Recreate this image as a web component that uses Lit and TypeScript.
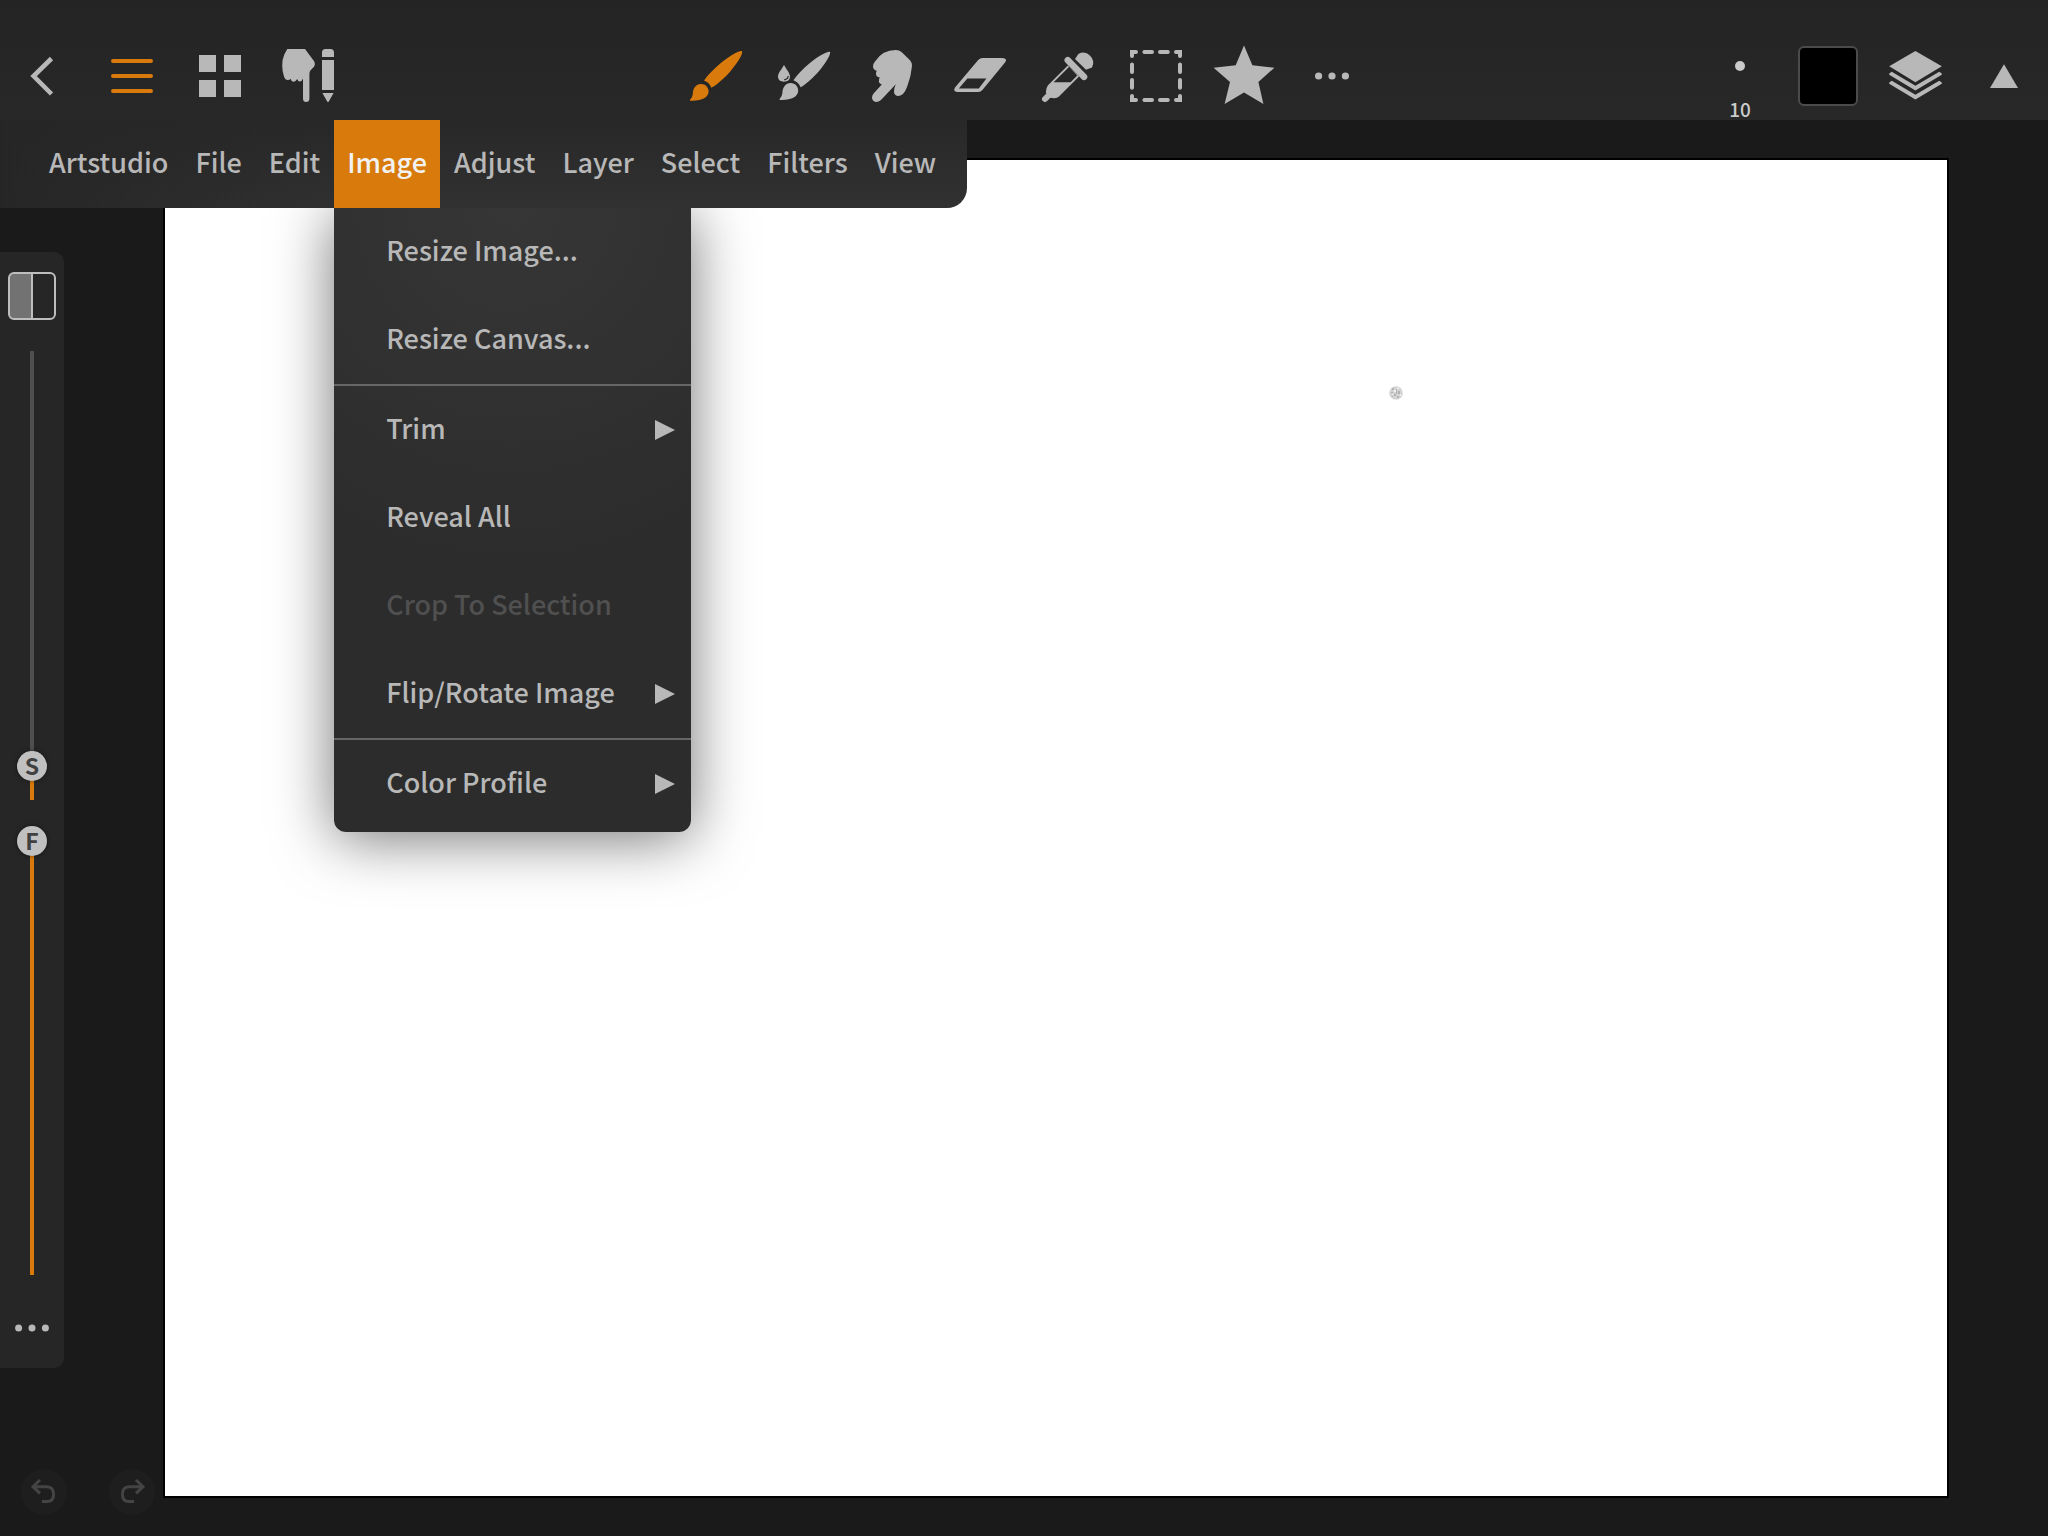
import { LitElement, css, html, svg, nothing, type TemplateResult } from "lit";
import { customElement, property, state } from "lit/decorators.js";
import { classMap } from "lit/directives/class-map.js";
import { styleMap } from "lit/directives/style-map.js";

const BRISTLES =
  "M18 68.8 V67.8 Q20.4 66 20.8 62 C21 56.4 23.8 52 29 52 C33.6 52 36.6 55.6 36.6 59.6 C36.4 65.6 29.5 69.4 18 68.8 Z";
const HANDLE =
  "M70 19.2 C70.4 20 70 21.6 69.2 23.4 C66.2 30 57.4 41.6 48 49.6 C45 52.2 42 54.6 39.4 55.8 C38.2 52.6 35.6 49.8 32 48.6 C37 41 49 29.6 60 23 C64.6 20.4 69 18.6 70 19.2 Z";

const ICONS: Record<string, TemplateResult> = {
  back: svg`<path d="M51.5 26.5 L33.6 44 L51.5 62" fill="none" stroke="currentColor" stroke-width="4.6" />`,
  menu: svg`<path d="M25 29 H63 M25 44 H63 M25 59 H63" fill="none" stroke="currentColor" stroke-width="4" stroke-linecap="round" />`,
  grid: svg`<path d="M23 23h17v17h-17z M48 23h17v17h-17z M23 48h17v17h-17z M48 48h17v17h-17z" />`,
  touch: svg`
    <path d="M23.3 17 H41 L50.3 29.4 Q51.8 32.4 50.2 34.6 L46.4 38.6 Q45.4 39.8 45.4 42 V66.8 Q45.2 70 42.2 70 Q39.2 70 39 66.8 V46.4 Q37.8 49.6 35.8 49.6 Q34 49.6 33.2 47 Q31.6 50 29.2 49.8 Q27.4 49.4 26.8 47 Q24.6 48.4 22.8 47.8 Q20.6 47 20 44.4 Q18.2 39 18.2 33.6 Q18.2 27 20.4 22.2 Z" />
    <path d="M58 25 V20.5 Q58 17 61.5 17 H66.5 Q70 17 70 20.5 V25 Z M58 28 H70 V58 H58 Z M58.4 61 H69.6 L64.8 69.4 Q64 70.4 63.2 69.4 Z" />`,
  brush: svg`<path d="${BRISTLES}" /><path d="${HANDLE}" />`,
  wet: svg`
    <path d="${BRISTLES}" transform="translate(1.6 -.9)" />
    <path d="${HANDLE}" transform="translate(2.6 1.2) scale(.963 .97)" />
    <path d="M24 33 C26.4 37.4 30 41 30 44.6 C30 48 27.4 49.8 24 49.8 C20.6 49.8 18 48 18 44.6 C18 41 21.6 37.4 24 33 Z" />
    <path d="M28.2 44 Q28 47.2 24.2 47.8" fill="none" stroke="#272727" stroke-width="1.2" />`,
  smudge: svg`<path d="M47.7 18 Q51.4 18 53.8 20.2 L62 28.2 Q64 30.4 64 33.8 Q63.2 44 59.6 53.2 Q57.6 59.4 54.6 62.2 Q52.4 64.2 49.8 64 Q46 63.2 46 59.4 Q46 56 47.8 52.2 L33 68 Q30.8 70 28 70 Q24.2 69.4 24 65.8 Q24 63.4 25.6 61.6 L33.8 52.6 Q30.2 51 31 48 Q31 46.8 31.8 45.4 Q27.8 45 28 41.4 Q28 40 28.8 38.8 Q25.2 38.2 25 34.6 Q24.8 31.8 27 29.4 Q34.4 18 47.7 18 Z" />`,
  eraser: svg`
    <path d="M46.6 26 H66.4 Q72 26.4 69 30.6 L46.6 57.8 Q44.8 60 42.2 60 H21.4 Q16.6 59.4 19 55.4 L42 28.2 Q44 26 46.6 26 Z" />
    <path d="M31.4 46.6 H50.4 L42.8 56.6 H22.8 Z" fill="#272727" />`,
  picker: svg`
    <path d="M51 27 L54.4 22 A10 10 0 0 1 68 35.4 L62 37.8 Z" />
    <path d="M43.8 28.2 L60 44.8" fill="none" stroke="currentColor" stroke-width="6.6" stroke-linecap="round" />
    <path d="M43.8 33.4 L24 53.2 Q21.8 56 21.8 60.4 L25.6 65.4 Q32 67.4 35 64.4 L55 44.6 Z" />
    <path d="M45.2 34.8 L29.6 50.2 H46.6 L53.2 43.4 Z" fill="#272727" />
    <path d="M21 67 L26 62" fill="none" stroke="currentColor" stroke-width="6" stroke-linecap="round" />`,
  select: svg`<g fill="none" stroke="currentColor" stroke-width="4" stroke-linecap="round">
    <path d="M20 24 V20 H24 M64 20 H68 V24 M68 64 V68 H64 M24 68 H20 V64" />
    <path d="M32.4 20 H40 M48 20 H55.8 M32.4 68 H40 M48 68 H55.8 M20 32.4 V40 M20 48 V55.8 M68 32.4 V40 M68 48 V55.8" />
  </g>`,
  star: svg`<path d="M44 13.6 L52.4 33.3 L74.4 35.7 L58.4 50 L63.4 72 L44 60.4 L24.6 72 L30 50 L13.6 35.7 L35.7 33.3 Z" />`,
  more: svg`<circle cx="30.6" cy="44" r="3.6" /><circle cx="44" cy="44" r="3.6" /><circle cx="57.4" cy="44" r="3.6" />`,
  layers: svg`
    <path d="M43.4 19 L69.8 34.3 L43.4 50.2 L17.2 34.3 Z" />
    <path d="M19.8 39.8 L43.4 53.8 L67.2 39.8 L69.8 41.4 V42.8 L43.4 58.6 L17.2 42.8 V41.4 Z" />
    <path d="M19.8 48.8 L43.4 62.8 L67.2 48.8 L69.8 50.4 V51.8 L43.4 67.6 L17.2 51.8 V50.4 Z" />`,
  collapse: svg`<path d="M44 32.2 L58 56 H30 Z" />`,
};

const icon = (name: string) =>
  html`<svg viewBox="0 0 88 88" width="88" height="88" fill="currentColor" aria-hidden="true">${ICONS[name]}</svg>`;

interface Tool {
  id: string;
  label: string;
}

const FILE_TOOLS: Tool[] = [
  { id: "back", label: "Back" },
  { id: "menu", label: "Menu" },
  { id: "grid", label: "Gallery" },
  { id: "touch", label: "Touch and pencil" },
];

const PAINT_TOOLS: Tool[] = [
  { id: "brush", label: "Brush" },
  { id: "wet", label: "Wet brush" },
  { id: "smudge", label: "Smudge" },
  { id: "eraser", label: "Eraser" },
  { id: "picker", label: "Eyedropper" },
  { id: "select", label: "Selection" },
  { id: "star", label: "Favorites" },
  { id: "more", label: "More tools" },
];

const MENUS = ["Artstudio", "File", "Edit", "Image", "Adjust", "Layer", "Select", "Filters", "View"];

interface Entry {
  label: string;
  submenu?: boolean;
  disabled?: boolean;
}

const IMAGE_MENU: Entry[][] = [
  [{ label: "Resize Image..." }, { label: "Resize Canvas..." }],
  [
    { label: "Trim", submenu: true },
    { label: "Reveal All" },
    { label: "Crop To Selection", disabled: true },
    { label: "Flip/Rotate Image", submenu: true },
  ],
  [{ label: "Color Profile", submenu: true }],
];

const resets = css`
  *,
  *::before,
  *::after {
    box-sizing: border-box;
  }
  button {
    margin: 0;
    padding: 0;
    border: 0;
    background: none;
    color: inherit;
    font: inherit;
    cursor: pointer;
  }
  svg {
    display: block;
  }
`;

@customElement("tool-bar")
class ToolBar extends LitElement {
  @state() private tool = "brush";

  static styles = [
    resets,
    css`
      :host {
        display: grid;
        grid-template-columns: 1fr auto 1fr;
        height: 120px;
        padding-top: 32px;
        background: linear-gradient(#242424, #282828);
        color: #b8b8b8;
      }
      .group {
        display: flex;
      }
      .end {
        justify-content: flex-end;
      }
      .tool {
        display: flex;
        align-items: center;
        justify-content: center;
        width: 88px;
        height: 88px;
      }
      .active {
        color: #d97b0c;
      }
      .size {
        flex-direction: column;
        justify-content: space-between;
        padding: 29px 0 1px;
        color: #cbcbcb;
        font-size: 19px;
        font-weight: 500;
        line-height: 20px;
      }
      .dot {
        width: 10px;
        height: 10px;
        border-radius: 50%;
        background: #cbcbcb;
      }
      .swatch {
        width: 60px;
        height: 60px;
        border: 2px solid #4b4b4b;
        border-radius: 6px;
        background: #000;
      }
    `,
  ];

  render() {
    return html`
      <div class="group">
        ${FILE_TOOLS.map(
          (t) => html`<button class=${classMap({ tool: true, active: t.id === "menu" })} aria-label=${t.label}>
            ${icon(t.id)}
          </button>`,
        )}
      </div>
      <div class="group">
        ${PAINT_TOOLS.map(
          (t) => html`<button
            class=${classMap({ tool: true, active: t.id === this.tool })}
            aria-label=${t.label}
            @click=${() => (this.tool = t.id)}
          >
            ${icon(t.id)}
          </button>`,
        )}
      </div>
      <div class="group end">
        <button class="tool size"><span class="dot"></span><span>10</span></button>
        <button class="tool" aria-label="Color"><span class="swatch"></span></button>
        <button class="tool" aria-label="Layers">${icon("layers")}</button>
        <button class="tool" aria-label="Collapse">${icon("collapse")}</button>
      </div>
    `;
  }
}

@customElement("menu-bar")
class MenuBar extends LitElement {
  @state() private open = "Image";

  static styles = [
    resets,
    css`
      :host {
        display: flex;
        gap: 1px;
        height: 88px;
        padding: 0 18px 0 36px;
        border-radius: 0 0 20px 0;
        background: linear-gradient(90deg, #262626, #26262600 360px), linear-gradient(#282828, #313131);
        color: #b8b8b8;
        font-size: 27px;
        font-weight: 500;
        line-height: 40px;
      }
      .slot {
        position: relative;
        display: flex;
      }
      .title {
        padding: 0 13px 4px;
        white-space: nowrap;
      }
      .open {
        background: #d97b0c;
        color: #f2f2f2;
      }
      .menu {
        position: absolute;
        top: 100%;
        left: 0;
        width: 357px;
        padding-bottom: 4px;
        border-radius: 0 0 12px 12px;
        background: radial-gradient(circle 360px at 50% 0, #363636, #2c2c2c);
        box-shadow: 0 6px 60px rgba(0, 0, 0, 0.55);
        clip-path: inset(0 -100px -100px -100px);
      }
      .section + .section {
        border-top: 2px solid #666;
      }
      .entry {
        display: flex;
        align-items: center;
        justify-content: space-between;
        width: 100%;
        height: 88px;
        padding: 0 16px 0 52px;
        text-align: left;
        white-space: nowrap;
      }
      .entry:disabled {
        color: #505050;
        cursor: default;
      }
      .name {
        padding-bottom: 4px;
      }
    `,
  ];

  private entry(e: Entry) {
    return html`<button class="entry" role="menuitem" ?disabled=${e.disabled}>
      <span class="name">${e.label}</span>
      ${e.submenu
        ? html`<svg viewBox="0 0 20 20" width="20" height="20" fill="currentColor" aria-hidden="true">
            <path d="M0 0 L20 10 L0 20 Z" />
          </svg>`
        : nothing}
    </button>`;
  }

  render() {
    return MENUS.map(
      (name) => html`<div class="slot">
        <button
          class=${classMap({ title: true, open: name === this.open })}
          aria-haspopup="menu"
          aria-expanded=${name === this.open}
          @click=${() => (this.open = this.open === name ? "" : name)}
        >
          ${name}
        </button>
        ${name === "Image" && this.open === name
          ? html`<div class="menu" role="menu" aria-label="Image">
              ${IMAGE_MENU.map((s) => html`<div class="section" role="group">${s.map((e) => this.entry(e))}</div>`)}
            </div>`
          : nothing}
      </div>`,
    );
  }
}

@customElement("knob-slider")
class KnobSlider extends LitElement {
  @property() letter = "";
  @property() name = "";
  @property({ type: Number }) value = 0;

  static styles = [
    resets,
    css`
      :host {
        display: flex;
        min-height: 0;
      }
      .slider {
        position: relative;
        width: 30px;
        background: linear-gradient(to top, #d97b0c var(--level), #4f4f4f var(--level)) center / 4px 100% no-repeat;
      }
      .range {
        position: absolute;
        top: 0;
        left: 0;
        appearance: none;
        writing-mode: vertical-lr;
        direction: rtl;
        width: 30px;
        height: 100%;
        margin: 0;
        background: none;
      }
      .range::-webkit-slider-thumb {
        appearance: none;
        width: 30px;
        height: 30px;
        border-radius: 50%;
        background: #c0c0c0;
        box-shadow: 0 0 4px rgba(0, 0, 0, 0.5);
      }
      .letter {
        position: absolute;
        left: 0;
        bottom: calc((100% - 30px) * var(--ratio));
        width: 30px;
        height: 30px;
        color: #404040;
        font-size: 23px;
        font-weight: 700;
        line-height: 28px;
        text-align: center;
        pointer-events: none;
      }
    `,
  ];

  render() {
    const vars = {
      "--ratio": String(this.value / 1000),
      "--level": `calc((100% - 30px) * ${this.value / 1000} + 15px)`,
    };
    return html`<div class="slider" style=${styleMap(vars)}>
      <input
        class="range"
        id="range"
        type="range"
        min="0"
        max="1000"
        aria-label=${this.name}
        .value=${String(this.value)}
        @input=${(e: Event) => (this.value = Number((e.target as HTMLInputElement).value))}
      />
      <label class="letter" for="range">${this.letter}</label>
    </div>`;
  }
}

@customElement("side-bar")
class SideBar extends LitElement {
  static styles = [
    resets,
    css`
      :host {
        display: flex;
        flex-direction: column;
        width: 64px;
        padding: 20px 0;
        align-items: center;
        border-radius: 0 10px 10px 0;
        background: #262626;
        color: #b8b8b8;
      }
      .split {
        flex: none;
        width: 48px;
        height: 48px;
        border: 2px solid #bdbdbd;
        border-radius: 6px;
        background: linear-gradient(90deg, #727272 21px, #bdbdbd 21px 23px, #262626 23px);
      }
      .sliders {
        display: grid;
        flex: 1;
        grid-template-rows: 1fr 1fr;
        gap: 26px;
        min-height: 0;
        padding: 31px 0 33px;
      }
      .more {
        display: flex;
        flex: none;
        align-items: center;
        justify-content: center;
        width: 64px;
        height: 40px;
      }
    `,
  ];

  render() {
    return html`
      <button class="split" aria-label="Hand side"></button>
      <div class="sliders">
        <knob-slider letter="S" name="Size" value="46"></knob-slider>
        <knob-slider letter="F" name="Flow" value="1000"></knob-slider>
      </div>
      <button class="more" aria-label="More brush options">
        <svg viewBox="0 0 40 10" width="40" height="10" fill="currentColor" aria-hidden="true">
          <circle cx="6.6" cy="5" r="3.5" />
          <circle cx="20" cy="5" r="3.5" />
          <circle cx="33.4" cy="5" r="3.5" />
        </svg>
      </button>
    `;
  }
}

@customElement("app-root")
class AppRoot extends LitElement {
  static styles = [
    resets,
    css`
      :host {
        display: flex;
        flex-direction: column;
        min-height: 100vh;
        background: #1a1a1a;
        font-family: "Noto Sans CJK SC", "Noto Sans", sans-serif;
      }
      .stage {
        position: relative;
        display: flex;
        flex: 1;
      }
      .bar {
        position: absolute;
        top: 0;
        left: 0;
        z-index: 1;
      }
      .rail {
        display: flex;
        flex-direction: column;
        width: 163px;
        padding: 132px 0 21px;
      }
      .panel {
        flex: 1;
      }
      .history {
        display: flex;
        gap: 42px;
        padding: 101px 0 0 21px;
      }
      .step {
        width: 46px;
        height: 46px;
        border-radius: 50%;
        background: #1e1e1e;
        color: #444;
      }
      .redo {
        transform: scaleX(-1);
      }
      .canvas {
        position: relative;
        flex: 1;
        margin: 38px 99px 38px 0;
        border: 2px solid #000;
        background: #fff;
      }
      .cursor {
        position: absolute;
        top: 226px;
        left: 1224px;
      }
    `,
  ];

  private arrow() {
    return html`<svg viewBox="0 0 46 46" width="46" height="46" fill="none" stroke="currentColor" stroke-width="3" aria-hidden="true">
      <path d="M19 11 L12 17.7 L19 24.4 M12 17.7 H26 Q32.6 18 32.6 25.2 Q32.6 32.4 26 32.6 H21" />
    </svg>`;
  }

  render() {
    return html`
      <tool-bar></tool-bar>
      <main class="stage">
        <menu-bar class="bar"></menu-bar>
        <div class="rail">
          <side-bar class="panel"></side-bar>
          <div class="history">
            <button class="step" aria-label="Undo">${this.arrow()}</button>
            <button class="step redo" aria-label="Redo">${this.arrow()}</button>
          </div>
        </div>
        <section class="canvas" aria-label="Canvas">
          <svg class="cursor" viewBox="0 0 14 14" width="14" height="14" aria-hidden="true">
            <circle cx="7" cy="7" r="6.8" fill="#d4d4d4" />
            <g fill="#b2b2b2">
              <rect x="3" y="2" width="2" height="2" /><rect x="7" y="3" width="1" height="5" />
              <rect x="9" y="5" width="2" height="3" /><rect x="2" y="6" width="2" height="1" />
              <rect x="5" y="8" width="2" height="2" /><rect x="8" y="10" width="2" height="2" />
              <rect x="3" y="10" width="1" height="1" />
            </g>
            <g fill="#f2f2f2">
              <rect x="5" y="4" width="2" height="2" /><rect x="8" y="2" width="2" height="1" />
              <rect x="3" y="8" width="1" height="1" /><rect x="11" y="8" width="1" height="2" />
            </g>
          </svg>
        </section>
      </main>
    `;
  }
}
